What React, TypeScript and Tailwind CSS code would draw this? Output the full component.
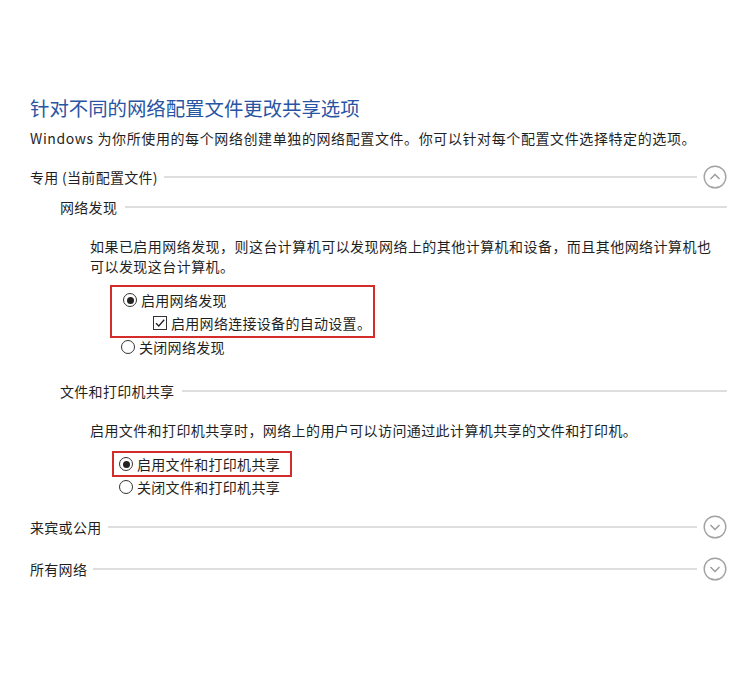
import { ReactNode } from 'react';

const font = { fontFamily: '"Noto Sans CJK SC", "Noto Sans", sans-serif' };

const Toggle = ({ up }: { up?: boolean }) => (
  <svg width="24" height="24" viewBox="0 0 24 24" className="shrink-0 ml-[6px]">
    <circle cx="12" cy="12" r="10.8" fill="none" stroke="#a3a3a3" strokeWidth="1.4" />
    <path
      d={up ? 'M7.5 14 L12 9.5 L16.5 14' : 'M7.5 10 L12 14.5 L16.5 10'}
      fill="none"
      stroke="#9a9a9a"
      strokeWidth="1.4"
    />
  </svg>
);

const Header = ({ title, up }: { title: string; up?: boolean }) => (
  <div className="flex items-center h-[24px]">
    <span className="text-[14px] text-[#1f1f1f] whitespace-nowrap tracking-[0.3px]">{title}</span>
    <div className="flex-1 h-[2px] bg-[#dedede] ml-[6px]" />
    <Toggle up={up} />
  </div>
);

const SubHeader = ({ title }: { title: string }) => (
  <div className="flex items-center h-[22px] pl-[30px]">
    <span className="text-[14px] text-[#1f1f1f] whitespace-nowrap tracking-[0.3px]">{title}</span>
    <div className="flex-1 h-[2px] bg-[#dedede] ml-[8px]" />
  </div>
);

const Radio = ({ checked, children }: { checked?: boolean; children: ReactNode }) => (
  <div className="flex items-center h-[22px] text-[14px] text-[#1f1f1f] tracking-[0.3px]">
    <span className="w-[14px] h-[14px] rounded-full border border-[#333] flex items-center justify-center shrink-0 mr-[4px]">
      {checked && <span className="w-[7px] h-[7px] rounded-full bg-[#222]" />}
    </span>
    {children}
  </div>
);

const Check = ({ children }: { children: ReactNode }) => (
  <div className="flex items-center h-[24px] text-[14px] text-[#1f1f1f] pl-[30px] tracking-[0.3px]">
    <span className="w-[14px] h-[14px] border border-[#333] flex items-center justify-center shrink-0 mr-[4px]">
      <svg width="12" height="12" viewBox="0 0 12 12">
        <path d="M2 6.2 L4.8 9 L10.2 2.8" fill="none" stroke="#222" strokeWidth="1.3" />
      </svg>
    </span>
    {children}
  </div>
);

export default function App() {
  return (
    <div className="w-[750px] h-[681px] bg-white pl-[30px] pr-[23px] pt-[94px]" style={font}>
      <h1 className="text-[19.4px] leading-[28px] text-[#2855a3] font-normal">
        针对不同的网络配置文件更改共享选项
      </h1>
      <p className="mt-[6px] text-[14px] leading-[20px] text-[#1f1f1f] tracking-[0.6px] whitespace-nowrap">
        Windows 为你所使用的每个网络创建单独的网络配置文件。你可以针对每个配置文件选择特定的选项。
      </p>

      <div className="mt-[17px]">
        <Header title="专用 (当前配置文件)" up />
      </div>
      <div className="mt-[7px]">
        <SubHeader title="网络发现" />
      </div>
      <p className="mt-[18px] pl-[60px] pr-[12px] text-[14px] leading-[20px] text-[#1f1f1f] tracking-[0.45px]">
        如果已启用网络发现，则这台计算机可以发现网络上的其他计算机和设备，而且其他网络计算机也可以发现这台计算机。
      </p>

      <div className="mt-[9px] pl-[80px]">
        <div className="w-[265px] border-2 border-[#d42b2b] pl-[11px] pt-[2px] pb-[1px]">
          <Radio checked>启用网络发现</Radio>
          <Check>启用网络连接设备的自动设置。</Check>
        </div>
        <div className="pl-[11px] -mt-[2px]">
          <Radio>关闭网络发现</Radio>
        </div>
      </div>

      <div className="mt-[22px]">
        <SubHeader title="文件和打印机共享" />
      </div>
      <p className="mt-[18px] pl-[60px] text-[14px] leading-[20px] text-[#1f1f1f] tracking-[0.4px]">
        启用文件和打印机共享时，网络上的用户可以访问通过此计算机共享的文件和打印机。
      </p>

      <div className="mt-[11px] pl-[82px]">
        <div className="w-[180px] border-2 border-[#d42b2b] pl-[5px]">
          <Radio checked>启用文件和打印机共享</Radio>
        </div>
        <div className="pl-[7px] -mt-[1px]">
          <Radio>关闭文件和打印机共享</Radio>
        </div>
      </div>

      <div className="mt-[17px]">
        <Header title="来宾或公用" />
      </div>
      <div className="mt-[18px]">
        <Header title="所有网络" />
      </div>
    </div>
  );
}
